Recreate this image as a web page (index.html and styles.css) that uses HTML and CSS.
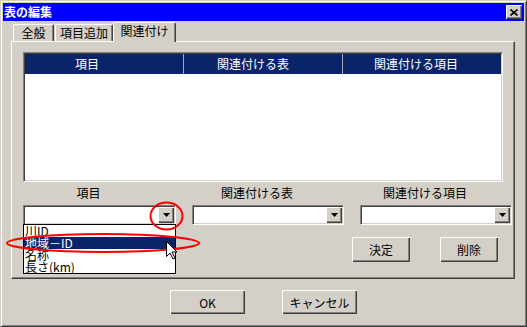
FILE: index.html
```html
<!DOCTYPE html>
<html lang="ja">
<head>
    <meta charset="UTF-8">
    <title>表の編集</title>
    <link rel="stylesheet" href="styles.css">
</head>
<body>
    <div class="window">
        <div class="titlebar">
            <span class="title">表の編集</span>
            <button class="close-btn">
                <svg width="8" height="7" viewBox="0 0 8 7"><path d="M0.5 0.5L7.5 6.5M7.5 0.5L0.5 6.5" stroke="#000" stroke-width="1.6"/></svg>
            </button>
        </div>

        <div class="tabs">
            <div class="tab tab-general">全般</div>
            <div class="tab tab-add">項目追加</div>
            <div class="tab tab-link active">関連付け</div>
        </div>

        <div class="panel">
            <div class="listview">
                <div class="lv-header">
                    <div class="lv-col col-1">項目</div>
                    <div class="lv-col col-2">関連付ける表</div>
                    <div class="lv-col col-3">関連付ける項目</div>
                </div>
            </div>

            <div class="fields">
                <div class="field field-1">
                    <div class="field-label">項目</div>
                    <div class="combo">
                        <div class="combo-btn"><svg width="7" height="4"><path d="M0 0h7L3.5 4z"/></svg></div>
                        <ul class="dropdown">
                            <li>川ID</li>
                            <li class="selected">地域－ID</li>
                            <li>名称</li>
                            <li>長さ(km)</li>
                        </ul>
                    </div>
                </div>
                <div class="field">
                    <div class="field-label">関連付ける表</div>
                    <div class="combo">
                        <div class="combo-btn"><svg width="7" height="4"><path d="M0 0h7L3.5 4z"/></svg></div>
                    </div>
                </div>
                <div class="field">
                    <div class="field-label">関連付ける項目</div>
                    <div class="combo">
                        <div class="combo-btn"><svg width="7" height="4"><path d="M0 0h7L3.5 4z"/></svg></div>
                    </div>
                </div>
            </div>

            <div class="actions">
                <button class="btn btn-small">決定</button>
                <button class="btn btn-small">削除</button>
            </div>
        </div>

        <div class="footer">
            <button class="btn btn-wide">OK</button>
            <button class="btn btn-wide">キャンセル</button>
        </div>

        <!-- 注釈（赤い丸とカーソル） -->
        <svg class="marks" width="527" height="327" viewBox="0 0 527 327">
            <ellipse cx="166.5" cy="216" rx="16" ry="13.5" fill="none" stroke="#ff0000" stroke-width="2"/>
            <ellipse cx="103" cy="243" rx="96" ry="9" fill="none" stroke="#ff0000" stroke-width="2"/>
            <path transform="translate(166.5 241.5)" d="M0 0V15L3.5 11.5L6.5 17.5L8.5 16.5L5.5 10.5H10.5Z" fill="#fff" stroke="#000" stroke-width="1"/>
        </svg>
    </div>
</body>
</html>
```

FILE: styles.css
```css
* {
    margin: 0;
    padding: 0;
    box-sizing: border-box;
}

body {
    background: #d4d0c8;
    font-family: "Noto Sans CJK JP", "Noto Sans", sans-serif;
    font-size: 12px;
    color: #000;
}

button {
    font-family: inherit;
    font-size: 12px;
    color: #000;
    border: none;
}

.window {
    position: relative;
    width: 527px;
    height: 327px;
    padding: 2px;
    background: #d4d0c8;
    border: 1px solid;
    border-color: #d4d0c8 #404040 #404040 #d4d0c8;
    box-shadow: inset 1px 1px #fff, inset -1px -1px #808080;
}

/* Title bar */
.titlebar {
    height: 18px;
    background: #0000ff;
    color: #fff;
    display: flex;
    align-items: center;
    justify-content: space-between;
    padding: 0 2px 0 1px;
}

.title {
    font-weight: bold;
    line-height: 16px;
}

.close-btn {
    width: 16px;
    height: 14px;
    background: #d4d0c8;
    display: flex;
    align-items: center;
    justify-content: center;
    box-shadow: inset 1px 1px #fff, inset -1px -1px #404040, inset -2px -2px #808080;
}

/* Tabs */
.tabs {
    height: 20px;
    display: flex;
    align-items: flex-end;
    padding-left: 10px;
}

.tab {
    height: 17px;
    line-height: 16px;
    text-align: center;
    border: 1px solid;
    border-bottom: none;
    border-color: #fff #404040 #fff #fff;
    border-radius: 2px 2px 0 0;
    box-shadow: inset -1px 0 #808080;
    background: #d4d0c8;
}

.tab-general { width: 41px; margin-right: 1px; }
.tab-add { width: 58px; }
.tab-link { width: 63px; }

.tab.active {
    height: 20px;
    line-height: 16px;
    margin-bottom: -1px;
    position: relative;
    z-index: 1;
}

/* Tab panel */
.panel {
    height: 238px;
    margin: 0 9px 0 8px;
    padding: 10px 0 0 11px;
    border: 1px solid;
    border-color: #fff #404040 #404040 #fff;
    box-shadow: inset -1px -1px #808080;
}

.listview {
    width: 480px;
    height: 130px;
    padding: 1px;
    background: #fff;
    border: 1px solid;
    border-color: #808080 #fff #fff #808080;
    box-shadow: inset 1px 1px #404040, inset -1px -1px #d4d0c8;
}

.lv-header {
    display: flex;
    height: 20px;
    background: #0a246a;
    color: #fff;
}

.lv-col {
    line-height: 20px;
    text-align: center;
}

.col-1 { width: 158px; padding-right: 34px; }
.col-2 { width: 159px; padding-right: 20px; border-left: 1px solid #a6a6b4; }
.col-3 { width: 159px; padding-right: 12px; border-left: 1px solid #a6a6b4; }

/* Combo fields */
.fields {
    display: flex;
    gap: 16px;
    margin-top: 4px;
}

.field {
    width: 152px;
}

.field-1 {
    width: 153px;
}

.field-label {
    height: 14px;
    line-height: 14px;
    text-align: center;
    padding-right: 22px;
    margin-bottom: 5px;
}

.combo {
    position: relative;
    height: 20px;
    padding: 1px;
    display: flex;
    justify-content: flex-end;
    background: #fff;
    border: 1px solid;
    border-color: #808080 #fff #fff #808080;
    box-shadow: inset 1px 1px #404040, inset -1px -1px #d4d0c8;
}

.combo-btn {
    width: 16px;
    height: 16px;
    background: #d4d0c8;
    display: flex;
    align-items: center;
    justify-content: center;
    box-shadow: inset 1px 1px #fff, inset -1px -1px #404040, inset -2px -2px #808080;
}

.dropdown {
    position: absolute;
    top: 18px;
    left: -1px;
    width: 153px;
    list-style: none;
    background: #fff;
    border: 1px solid #000;
    z-index: 2;
}

.dropdown li {
    height: 12px;
    line-height: 12px;
    padding-left: 1px;
    white-space: nowrap;
}

.dropdown li.selected {
    background: #0a246a;
    color: #fff;
}

/* Buttons */
.actions {
    display: flex;
    justify-content: flex-end;
    gap: 30px;
    margin-top: 12px;
    padding-right: 16px;
}

.btn {
    background: #d4d0c8;
    box-shadow: inset 1px 1px #fff, inset -1px -1px #404040, inset -2px -2px #808080;
}

.btn-small {
    width: 58px;
    height: 25px;
}

.footer {
    display: flex;
    justify-content: center;
    gap: 37px;
    margin-top: 11px;
}

.btn-wide {
    width: 75px;
    height: 24px;
}

.marks {
    position: absolute;
    top: -1px;
    left: -1px;
    pointer-events: none;
    z-index: 5;
}
```
